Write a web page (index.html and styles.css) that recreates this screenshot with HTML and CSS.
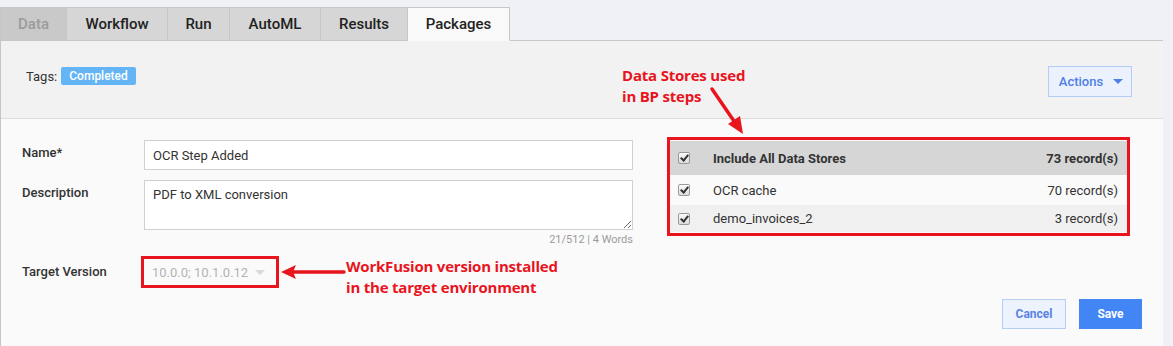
FILE: index.html
```html
<!DOCTYPE html>
<html>
<head>
  <title>Packages</title>
  <link rel="stylesheet" href="styles.css">
</head>
<body>
  <!-- Tabs -->
  <div class="tabs">
    <div class="tab disabled">Data</div>
    <div class="tab">Workflow</div>
    <div class="tab">Run</div>
    <div class="tab">AutoML</div>
    <div class="tab">Results</div>
    <div class="tab active">Packages</div>
  </div>

  <div class="panel">
    <div class="panel-head">
      <div class="tags">
        <span>Tags:</span>
        <span class="badge">Completed</span>
      </div>
      <button class="actions-btn">Actions <span class="caret"></span></button>

      <!-- annotation -->
      <div class="note note-stores">Data Stores used<br>in BP steps</div>
      <svg class="note-arrow-down" width="40" height="50" viewBox="0 0 40 50">
        <line x1="4" y1="3" x2="28" y2="38" stroke="#e8141e" stroke-width="3.5" stroke-linecap="round"/>
        <polygon points="35,48 20,38 32,30" fill="#e8141e"/>
      </svg>
    </div>

    <div class="panel-body">
      <div class="form">
        <div class="row">
          <label class="label">Name*</label>
          <div class="field"><input class="input" value="OCR Step Added"></div>
        </div>
        <div class="row">
          <label class="label">Description</label>
          <div class="field">
            <textarea class="textarea">PDF to XML conversion</textarea>
            <div class="counter">21/512 | 4 Words</div>
          </div>
        </div>
        <div class="row row-target">
          <label class="label">Target Version</label>
          <div class="select-wrap">
            <span>10.0.0; 10.1.0.12</span>
            <span class="select-caret"></span>
          </div>
          <svg class="note-arrow-left" width="66" height="16" viewBox="0 0 66 16">
            <line x1="12" y1="8" x2="64" y2="8" stroke="#e8141e" stroke-width="3.5" stroke-linecap="round"/>
            <polygon points="1,8 16,1 13,8 16,15" fill="#e8141e"/>
          </svg>
          <div class="note">WorkFusion version installed<br>in the target environment</div>
        </div>
      </div>

      <div class="stores">
        <div class="store-row store-head">
          <span class="check"></span>
          <span class="store-name">Include All Data Stores</span>
          <span class="store-count">73 record(s)</span>
        </div>
        <div class="store-row">
          <span class="check"></span>
          <span class="store-name">OCR cache</span>
          <span class="store-count">70 record(s)</span>
        </div>
        <div class="store-row store-alt">
          <span class="check"></span>
          <span class="store-name">demo_invoices_2</span>
          <span class="store-count">3 record(s)</span>
        </div>
      </div>
    </div>

    <div class="panel-foot">
      <button class="btn btn-cancel">Cancel</button>
      <button class="btn btn-save">Save</button>
    </div>
  </div>
</body>
</html>
```

FILE: styles.css
```css
body {
  margin: 0;
  background: #f0f1f6;
  font-family: Roboto, 'Liberation Sans', Arial, sans-serif;
  font-size: 13px;
  color: #333;
  height: 346px;
  overflow: hidden;
}

/* Tabs */
.tabs {
  display: flex;
  padding-top: 7px;
  height: 33px;
}

.tab {
  box-sizing: border-box;
  height: 34px;
  display: flex;
  align-items: center;
  justify-content: center;
  background: #d6d6d6;
  border: 1px solid #c6c6c6;
  border-left: none;
  font-size: 15px;
  font-weight: 500;
  color: #222;
}

.tab:nth-child(2) { width: 101px; }
.tab:nth-child(3) { width: 62px; }
.tab:nth-child(4) { width: 91px; }
.tab:nth-child(5) { width: 87px; }
.tab:nth-child(6) { width: 102px; }

.tab.disabled {
  width: 67px;
  background: #c9c9c9;
  color: #9b9b9b;
  border-left: 1px solid #c6c6c6;
}

.tab.active {
  background: #f9f9f9;
  border-bottom-color: #f9f9f9;
  position: relative;
  z-index: 1;
}

/* Panel */
.panel {
  margin-right: 10px;
  border-top: 1px solid #c8c8c8;
  border-left: 1px solid #c6c6c6;
  background: #fafafa;
  height: 306px;
}

.panel-head {
  box-sizing: border-box;
  position: relative;
  height: 78px;
  background: #f2f2f2;
  border-bottom: 1px solid #dcdcdc;
  display: flex;
  align-items: flex-start;
  justify-content: space-between;
  padding: 25px 31px 0 25px;
}

.tags {
  display: flex;
  align-items: center;
  gap: 4px;
  font-size: 13px;
  color: #333;
  margin-top: 1px;
}

.badge {
  background: #64b5f6;
  color: #fff;
  font-size: 12px;
  font-weight: 500;
  border-radius: 2px;
  padding: 0 8px;
  height: 18px;
  line-height: 18px;
}

.actions-btn {
  width: 84px;
  height: 31px;
  background: #ebf2fe;
  border: 1px solid #b5cdf6;
  color: #4f80e6;
  font-family: inherit;
  font-size: 13px;
  font-weight: 500;
  display: flex;
  align-items: center;
  justify-content: center;
  gap: 10px;
  padding: 0 0 0 2px;
}

.caret {
  width: 0;
  height: 0;
  border-left: 5px solid transparent;
  border-right: 5px solid transparent;
  border-top: 5px solid #4f80e6;
}

/* Annotations */
.note {
  font-family: 'Open Sans', 'DejaVu Sans', sans-serif;
  font-weight: 700;
  font-size: 15px;
  line-height: 21px;
  color: #e8141e;
  letter-spacing: -0.2px;
}

.note-stores {
  position: absolute;
  left: 621px;
  top: 24px;
}

.note-arrow-down {
  position: absolute;
  left: 707px;
  top: 45px;
}

/* Body */
.panel-body {
  display: flex;
  align-items: flex-start;
  padding: 18px 0 0 21px;
}

.form {
  width: 612px;
  padding-top: 3px;
}

.row {
  display: flex;
  margin-bottom: 10px;
}

.label {
  width: 122px;
  flex: none;
  font-weight: 500;
  color: #333;
  padding-top: 5px;
}

.field {
  width: 489px;
}

.input,
.textarea {
  box-sizing: border-box;
  width: 100%;
  border: 1px solid #d0d0d0;
  background: #fff;
  font-family: inherit;
  font-size: 13px;
  color: #333;
  padding: 0 8px;
  margin: 0;
}

.input {
  height: 30px;
  display: block;
}

.textarea {
  height: 50px;
  padding-top: 6px;
  resize: vertical;
  display: block;
}

.counter {
  text-align: right;
  font-size: 11px;
  color: #9a9a9a;
  margin-top: 3px;
  line-height: 14px;
}

.row-target {
  align-items: flex-start;
  margin-top: -1px;
  margin-bottom: 0;
}

.row-target .label {
  padding-top: 8px;
}

.select-wrap {
  box-sizing: border-box;
  width: 138px;
  height: 32px;
  margin-left: -3px;
  border: 3px solid #e8141e;
  display: flex;
  align-items: center;
  justify-content: space-between;
  padding: 0 11px 0 8px;
  color: #b4b4b4;
  font-size: 13px;
}

.select-caret {
  width: 0;
  height: 0;
  border-left: 5px solid transparent;
  border-right: 5px solid transparent;
  border-top: 5px solid #dadada;
}

.note-arrow-left {
  margin: 8px 0 0 1px;
  flex: none;
}

/* Data stores */
.stores {
  width: 457px;
  margin-left: 33px;
  border: 3px solid #e8141e;
  padding: 1px 0;
  background: #fafafa;
}

.store-row {
  display: flex;
  align-items: center;
  height: 30px;
  padding: 0 9px 0 8px;
  color: #333;
  font-size: 13px;
}

.store-head {
  height: 34px;
  background: #d6d6d6;
  font-weight: 700;
}

.store-alt {
  height: 27px;
  background: #f0f0f0;
}

.check {
  box-sizing: border-box;
  width: 12px;
  height: 12px;
  border: 1px solid #9a9a9a;
  border-radius: 2px;
  background: linear-gradient(#fafafa, #dcdcdc);
  position: relative;
  flex: none;
}

.check::after {
  content: "";
  position: absolute;
  left: 3px;
  top: 0px;
  width: 3px;
  height: 6px;
  border-right: 2px solid #333;
  border-bottom: 2px solid #333;
  transform: rotate(40deg);
}

.store-name {
  margin-left: 23px;
  flex: 1;
}

.store-count {
  text-align: right;
}

/* Footer */
.panel-foot {
  display: flex;
  justify-content: flex-end;
  gap: 13px;
  padding: 1px 21px 0 0;
}

.btn {
  height: 30px;
  font-family: inherit;
  font-size: 12px;
  font-weight: 700;
  border: 1px solid transparent;
  padding: 0;
}

.btn-cancel {
  width: 64px;
  background: #edf3fe;
  border-color: #b7cff7;
  color: #5a84e4;
}

.btn-save {
  width: 63px;
  background: #4285f4;
  color: #fff;
}
```
